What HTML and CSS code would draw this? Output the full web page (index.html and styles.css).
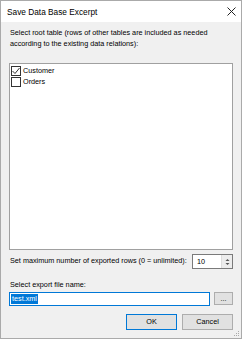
FILE: index.html
```html
<!DOCTYPE html>
<html>
<head>
<meta charset="utf-8">
<link rel="stylesheet" href="styles.css">
</head>
<body>
<div class="window">
  <div class="titlebar">
    <span class="title">Save Data Base Excerpt</span>
    <svg class="close" width="9" height="9" viewBox="0 0 9 9"><path d="M0.5 0.5 L8.5 8.5 M8.5 0.5 L0.5 8.5" stroke="#222" stroke-width="1" fill="none"/></svg>
  </div>
  <div class="client">
    <div class="label intro">Select root table (rows of other tables are included as needed<br>according to the existing data relations):</div>
    <div class="listbox">
      <div class="item"><span class="check checked"><svg width="8" height="8" viewBox="0 0 8 8"><path d="M0.5 4 L3 6.5 L7.5 1" stroke="#333" stroke-width="1" fill="none"/></svg></span><span>Customer</span></div>
      <div class="item"><span class="check"></span><span>Orders</span></div>
    </div>
    <div class="maxrow">
      <span class="label">Set maximum number of exported rows (0 = unlimited):</span>
      <div class="numeric">
        <span class="numval">10</span>
        <div class="spin">
          <svg width="7" height="12" viewBox="0 0 7 12"><path d="M1.5 5 L3.5 3 L5.5 5 Z" fill="#555"/><path d="M1.5 7 L3.5 9 L5.5 7 Z" fill="#555"/></svg>
        </div>
      </div>
    </div>
    <div class="label filelabel">Select export file name:</div>
    <div class="filerow">
      <div class="textbox"><span class="sel">test.xml</span></div>
      <div class="btn browse">...</div>
    </div>
    <div class="buttons">
      <div class="btn ok">OK</div>
      <div class="btn cancel">Cancel</div>
    </div>
    <svg class="grip" width="6" height="6" viewBox="0 0 6 6"><rect x="4" y="0" width="1" height="1" fill="#aaa"/><rect x="2" y="2" width="1" height="1" fill="#aaa"/><rect x="4" y="2" width="1" height="1" fill="#aaa"/><rect x="0" y="4" width="1" height="1" fill="#aaa"/><rect x="2" y="4" width="1" height="1" fill="#aaa"/><rect x="4" y="4" width="1" height="1" fill="#aaa"/></svg>
  </div>
</div>
</body>
</html>
```
FILE: styles.css
```css
* { box-sizing: border-box; }
html, body { margin: 0; padding: 0; }
body {
  width: 242px;
  height: 339px;
  font-family: "Liberation Sans", Arial, sans-serif;
  font-size: 7.25px;
  color: #000;
  overflow: hidden;
}
.window {
  width: 242px;
  height: 339px;
  border: 1px solid #aaaaaa;
  display: flex;
  flex-direction: column;
  background: #f0f0f0;
}
.titlebar {
  height: 21px;
  background: #fff;
  display: flex;
  align-items: center;
  justify-content: space-between;
  padding: 0 5px 0 6px;
  flex-shrink: 0;
}
.title { font-size: 8.3px; color: #000; }
.client {
  flex: 1;
  display: flex;
  flex-direction: column;
  padding: 6px 8px 0 8px;
  position: relative;
}
.label { line-height: 10.5px; white-space: nowrap; }
.intro { padding-left: 1px; }
.listbox {
  margin-top: 14px;
  height: 187px;
  background: #fff;
  border: 1px solid #a0a0a0;
  padding: 1px;
}
.item {
  display: flex;
  align-items: center;
  height: 11px;
  gap: 2px;
}
.check {
  width: 10px;
  height: 10px;
  border: 1px solid #333;
  background: #fff;
  display: flex;
  align-items: center;
  justify-content: center;
  flex-shrink: 0;
}
.check svg { display: block; }
.maxrow {
  margin-top: 4px;
  display: flex;
  align-items: center;
  justify-content: space-between;
  height: 15px;
  padding-left: 1px;
}
.numeric {
  width: 41px;
  height: 15px;
  flex-shrink: 0;
  border: 1px solid #7a7a7a;
  background: #fff;
  display: flex;
  align-items: center;
}
.numval { flex: 1; padding-left: 4px; }
.spin {
  width: 11px;
  height: 13px;
  background: #ececec;
  border-left: 1px solid #dcdcdc;
  display: flex;
  align-items: center;
  justify-content: center;
}
.filelabel { margin-top: 11px; padding-left: 1px; }
.filerow {
  margin-top: 1px;
  display: flex;
  justify-content: space-between;
  align-items: center;
  height: 14px;
}
.textbox {
  width: 201px;
  height: 14px;
  border: 1px solid #0078d7;
  background: #fff;
  padding-left: 1px;
  display: flex;
  align-items: center;
}
.sel {
  background: #0078d7;
  color: #fff;
  line-height: 10px;
  padding: 0 1px;
}
.btn {
  background: #e1e1e1;
  border: 1px solid #adadad;
  display: flex;
  align-items: center;
  justify-content: center;
}
.browse {
  width: 19px;
  height: 13px;
  font-size: 7px;
  line-height: 1;
  align-items: flex-end;
  padding-bottom: 2px;
}
.buttons {
  margin-top: 8px;
  display: flex;
  justify-content: flex-end;
  gap: 5px;
}
.ok, .cancel { width: 51px; height: 16px; }
.ok { border-color: #0078d7; }
.grip { position: absolute; right: 1px; bottom: 1px; }
```
